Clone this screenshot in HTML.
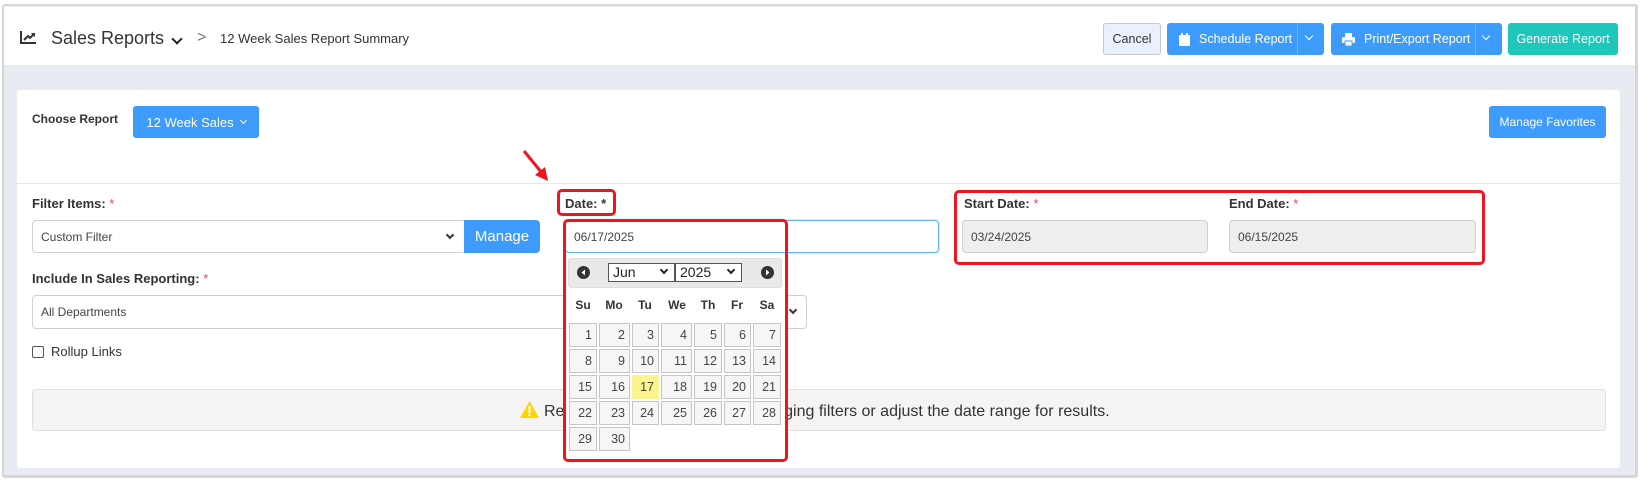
<!DOCTYPE html>
<html><head><meta charset="utf-8"><style>
*{box-sizing:border-box;margin:0;padding:0}
body{width:1640px;height:480px;overflow:hidden;background:#fff;font-family:"Liberation Sans",sans-serif;color:#333;position:relative}
.a{position:absolute}
.frame{left:2px;top:4px;width:1636px;height:474px;border:2px solid #d6d6d6;border-right-width:3px;border-bottom-width:3px;background:#e9ebf3;border-radius:3px}
.hdr{left:4px;top:6px;width:1631px;height:59px;background:#fff;border-top:1px solid #eee}
.btn{position:absolute;color:#fff;background:#3d9bfb;border-radius:3px;font-size:12.5px;display:flex;align-items:center;justify-content:center}
.card{left:17px;top:90px;width:1603px;height:378px;background:#fff;border-radius:3px}
.lbl{position:absolute;font-size:13px;font-weight:bold;color:#333}
.req{color:#e8465a;font-weight:normal}
.inp{position:absolute;border:1px solid #cfcfcf;border-radius:4px;background:#fff;font-size:12px;color:#444;display:flex;align-items:center;padding-left:8px}
.red{position:absolute;border:3px solid #f0141e;border-radius:5px}
.cell{position:absolute;background:#f6f6f6;border:1px solid #c5c5c5;font-size:12.5px;color:#454545;text-align:right;padding-right:4px;line-height:23px}
.dn{position:absolute;top:298px;font-size:12px;font-weight:bold;width:30px;text-align:center}
.chev{display:inline-block;width:7px;height:7px;border-right:2px solid currentColor;border-bottom:2px solid currentColor;transform:rotate(45deg)}
</style></head><body>
<div class="a frame"></div>
<div class="a hdr"></div>
<svg class="a" style="left:20px;top:31px" width="17" height="13" viewBox="0 0 17 13"><path d="M1 0V12H16" stroke="#333" stroke-width="2" fill="none"/><path d="M4 9L8 5L10 7L14 3" stroke="#333" stroke-width="2" fill="none"/><path d="M11 2H15V6Z" fill="#333"/></svg>
<div class="a" style="left:51px;top:28px;font-size:18px;color:#333">Sales Reports</div>
<div class="a" style="left:173px;top:30px;color:#222"><span class="chev" style="width:8px;height:8px"></span></div>
<div class="a" style="left:197px;top:29px;color:#777;font-size:16px">&gt;</div>
<div class="a" style="left:220px;top:31px;font-size:13px;color:#333">12 Week Sales Report Summary</div>

<div class="btn" style="left:1103px;top:23px;width:58px;height:32px;background:#e9f2fc;border:1px solid #c8c8c8;color:#333">Cancel</div>
<div class="btn" style="left:1167px;top:23px;width:157px;height:32px;justify-content:flex-start;padding-left:12px">
<svg width="11" height="13" viewBox="0 0 11 13"><rect x="0" y="2" width="11" height="11" rx="1" fill="#fff"/><rect x="2" y="0" width="2" height="3" fill="#fff"/><rect x="7" y="0" width="2" height="3" fill="#fff"/></svg>
<span style="margin-left:9px">Schedule Report</span><span class="chev" style="position:absolute;left:139px;top:10px;width:6px;height:6px;border-width:1.5px"></span></div>
<div class="a" style="left:1297px;top:23px;width:1px;height:32px;background:#6fb4fb"></div>
<div class="btn" style="left:1331px;top:23px;width:171px;height:32px;justify-content:flex-start;padding-left:11px">
<svg width="13" height="13" viewBox="0 0 13 13"><rect x="3" y="0" width="7" height="4" fill="#fff"/><rect x="0" y="4" width="13" height="6" rx="1" fill="#fff"/><rect x="3" y="8" width="7" height="5" fill="#fff" stroke="#3d9bfb"/></svg>
<span style="margin-left:9px">Print/Export Report</span><span class="chev" style="position:absolute;left:152px;top:10px;width:6px;height:6px;border-width:1.5px"></span></div>
<div class="a" style="left:1475px;top:23px;width:1px;height:32px;background:#6fb4fb"></div>
<div class="btn" style="left:1508px;top:23px;width:110px;height:32px;background:#1fc7bb">Generate Report</div>

<div class="a card"></div>
<div class="a" style="left:32px;top:112px;font-size:12px;font-weight:bold;color:#333">Choose Report</div>
<div class="btn" style="left:133px;top:106px;width:126px;height:32px;font-size:13px">12 Week Sales <span class="chev" style="width:5px;height:5px;border-width:1.3px;margin-left:7px;margin-top:-3px"></span></div>
<div class="btn" style="left:1489px;top:106px;width:117px;height:32px;font-size:12px">Manage Favorites</div>
<div class="a" style="left:17px;top:183px;width:1603px;height:1px;background:#e8e8e8"></div>

<div class="lbl" style="left:32px;top:196px">Filter Items: <span class="req">*</span></div>
<div class="inp" style="left:32px;top:220px;width:436px;height:33px">Custom Filter<span class="chev" style="position:absolute;right:14px;top:11px;width:6px;height:6px;color:#333"></span></div>
<div class="btn" style="left:464px;top:220px;width:76px;height:33px;font-size:15px;border-radius:0 4px 4px 0">Manage</div>
<div class="lbl" style="left:32px;top:271px">Include In Sales Reporting: <span class="req">*</span></div>
<div class="inp" style="left:32px;top:295px;width:775px;height:34px">All Departments<span class="chev" style="position:absolute;right:10px;top:11px;width:6px;height:6px;color:#333"></span></div>
<div class="a" style="left:32px;top:346px;width:12px;height:12px;border:1px solid #555;border-radius:2px"></div>
<div class="a" style="left:51px;top:344px;font-size:13px;color:#333">Rollup Links</div>

<div class="a" style="left:32px;top:389px;width:1574px;height:42px;background:#f4f4f4;border:1px solid #e0e0e0;border-radius:3px"></div>
<div class="a" style="left:520px;top:401px;font-size:16px;color:#333;white-space:nowrap"><svg style="vertical-align:-2px;margin-right:5px" width="19" height="17" viewBox="0 0 19 17"><path d="M9.5 0L19 17H0Z" fill="#ffd500"/><rect x="8.5" y="5" width="2" height="7" fill="#fff"/><rect x="8.5" y="13" width="2" height="2" fill="#fff"/></svg>Report returned no data. Try changing filters or adjust the date range for results.</div>

<div class="lbl" style="left:565px;top:196px">Date: *</div>
<div class="inp" style="left:565px;top:220px;width:374px;height:33px;border-color:#64aef7;box-shadow:0 0 2px #9cc9f7">06/17/2025</div>

<div class="lbl" style="left:964px;top:196px">Start Date: <span class="req">*</span></div>
<div class="inp" style="left:962px;top:220px;width:246px;height:33px;background:#eee">03/24/2025</div>
<div class="lbl" style="left:1229px;top:196px">End Date: <span class="req">*</span></div>
<div class="inp" style="left:1229px;top:220px;width:247px;height:33px;background:#eee">06/15/2025</div>
<div class="red" style="left:954px;top:190px;width:531px;height:75px"></div>

<div class="a" style="left:564px;top:253px;width:223px;height:210px;background:#fff"></div>
<div class="a" style="left:568px;top:258px;width:214px;height:30px;background:#e9e9e9;border:1px solid #ddd;border-radius:3px"></div>
<svg class="a" style="left:577px;top:266px" width="13" height="13" viewBox="0 0 13 13"><circle cx="6.5" cy="6.5" r="6.5" fill="#333"/><path d="M8 3.5L4.5 6.5L8 9.5Z" fill="#fff"/></svg>
<svg class="a" style="left:761px;top:266px" width="13" height="13" viewBox="0 0 13 13"><circle cx="6.5" cy="6.5" r="6.5" fill="#333"/><path d="M5 3.5L8.5 6.5L5 9.5Z" fill="#fff"/></svg>
<div class="a" style="left:608px;top:263px;width:67px;height:19px;border:1px solid #555;background:#fff;font-size:14px;padding-left:4px;line-height:17px;color:#222">Jun<span class="chev" style="position:absolute;right:7px;top:3px;width:6px;height:6px"></span></div>
<div class="a" style="left:675px;top:263px;width:67px;height:19px;border:1px solid #555;background:#fff;font-size:14px;padding-left:4px;line-height:17px;color:#222">2025<span class="chev" style="position:absolute;right:7px;top:3px;width:6px;height:6px"></span></div>
<div class="dn" style="left:568px">Su</div><div class="dn" style="left:599px">Mo</div><div class="dn" style="left:630px">Tu</div><div class="dn" style="left:662px">We</div><div class="dn" style="left:693px">Th</div><div class="dn" style="left:722px">Fr</div><div class="dn" style="left:752px">Sa</div>
<div id="cal"></div>
<script>
var xs=[[569,28],[599,31],[632,27],[661,31],[694,28],[724,27],[753,28]],ys=[323,349,375,401,427],h='';
for(var d=1;d<=30;d++){var i=d-1,c=i%7,r=Math.floor(i/7);
h+='<div class="cell" style="left:'+xs[c][0]+'px;top:'+ys[r]+'px;width:'+xs[c][1]+'px;height:24px'+(d==17?';background:#fbf48f;border-color:#fbf48f':'')+'">'+d+'</div>';}
document.getElementById('cal').innerHTML=h;
</script>
<div class="red" style="left:557px;top:189px;width:59px;height:27px"></div>
<div class="red" style="left:563px;top:219px;width:225px;height:243px"></div>
<svg class="a" style="left:520px;top:148px" width="32" height="36" viewBox="0 0 32 36"><path d="M4 3L22 25" stroke="#f0141e" stroke-width="3"/><path d="M28 33L15 27L25 19Z" fill="#f0141e"/></svg>
</body></html>
